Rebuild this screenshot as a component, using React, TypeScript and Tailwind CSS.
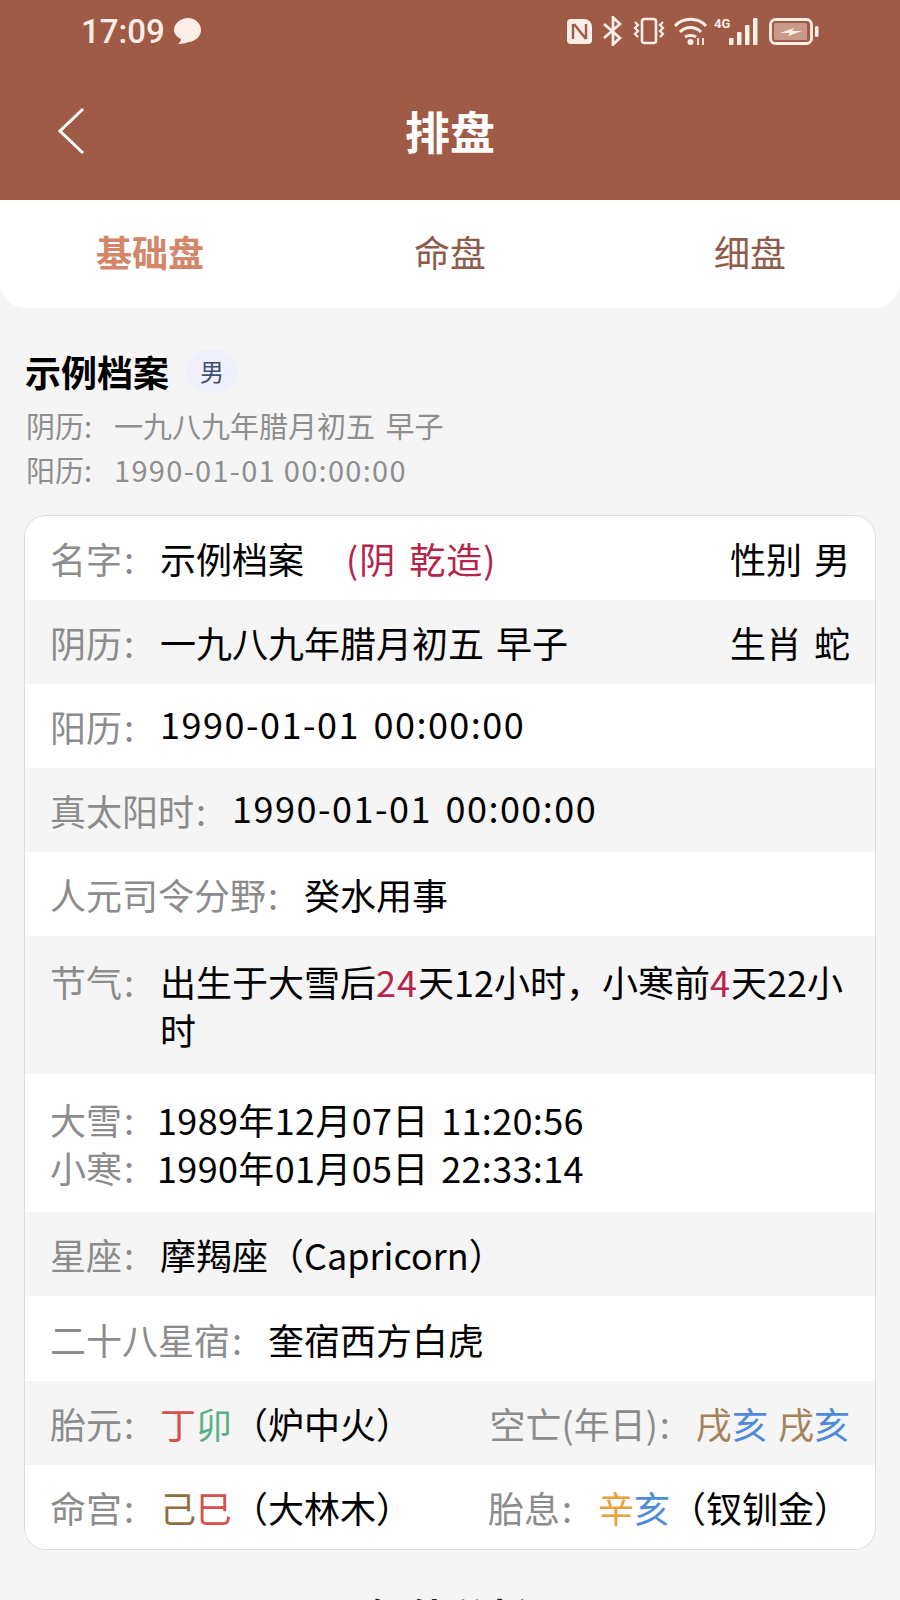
import React from 'react';

const font = '[font-family:"Noto_Sans_CJK_SC","Noto_Sans",sans-serif]';
const red = 'text-[#b5254a]';

const Label: React.FC<{ text: string }> = ({ text }) => (
  <span className="text-[#8c8c8c] mr-[26px]">{text}<span className="ml-[2px]">:</span></span>
);

const StatusIcons: React.FC = () => (
  <div className="flex items-center text-[#fdeee8]">
    <svg className="mr-[10px]" width="27" height="27" viewBox="0 0 27 27">
      <path d="M5 1h4v25H5a4 4 0 0 1-4-4V5a4 4 0 0 1 4-4z" fill="currentColor" />
      <path d="M9 1h9a8 8 0 0 1 8 8v13a4 4 0 0 1-4 4H9z" fill="currentColor" />
      <path d="M7 6v15M8 6l12 15M20 6v15" stroke="#9f5b45" strokeWidth="2.4" fill="none" />
    </svg>
    <svg className="mr-[10px]" width="19" height="30" viewBox="0 0 19 30" fill="none" stroke="currentColor" strokeWidth="2.8">
      <path d="M1 8l16 14-7 6.5V1.5L17 8 1 22" />
    </svg>
    <svg className="mr-[8px]" width="34" height="28" viewBox="0 0 34 28" fill="none" stroke="currentColor" strokeWidth="2.6">
      <rect x="10" y="2" width="14" height="24" rx="2.5" />
      <path d="M3 5l3 3-3 3 3 3-3 3 3 3M31 5l-3 3 3 3-3 3 3 3-3 3" strokeWidth="2.2" />
    </svg>
    <svg className="mr-[7px]" width="33" height="28" viewBox="0 0 33 28" fill="none" stroke="currentColor" strokeWidth="3">
      <path d="M1 9c8-9 23-9 31 0M6 15c6-6 15-6 21 0M11 20c3-2 8-2 11 0" />
      <circle cx="16.500" cy="25" r="3" fill="currentColor" stroke="none" />
      <path d="M24 21v7M29 21v7" strokeWidth="1.8" />
    </svg>
    <div className="flex items-start mr-[10px] w-[45px] h-[28px]">
      <span className="text-[13px] font-bold leading-none w-[15px] [font-family:'Roboto',sans-serif]">4G</span>
      <svg width="30" height="28" viewBox="0 0 30 28" fill="currentColor">
        <rect x="0" y="21" width="4.500" height="7" rx="1" />
        <rect x="8" y="15" width="4.500" height="13" rx="1" />
        <rect x="16" y="8" width="4.500" height="20" rx="1" />
        <rect x="24" y="1" width="4.500" height="27" rx="1" />
      </svg>
    </div>
    <svg width="50" height="27" viewBox="0 0 50 27">
      <rect x="1.500" y="1.500" width="41" height="24" rx="5" fill="none" stroke="currentColor" strokeWidth="2.8" />
      <rect x="5" y="5" width="33" height="17" rx="1.500" fill="#c99a89" />
      <path d="M11 15l14-5-2 3h10l-14 5 2-3z" fill="currentColor" />
      <rect x="46" y="8" width="3.500" height="11" rx="1.500" fill="currentColor" />
    </svg>
  </div>
);

const Row: React.FC<{ gray?: boolean; tall?: boolean; children: React.ReactNode }> = ({ gray, tall, children }) => (
  <div className={`pl-[25px] pr-[25px] flex items-center justify-between ${tall ? 'h-[85px]' : 'h-[84px]'} ${gray ? 'bg-[#f5f5f5]' : 'bg-white'}`}>
    {children}
  </div>
);

export default function App() {
  return (
    <div className={`w-[900px] h-[1600px] overflow-hidden bg-[#f5f5f5] ${font}`}>
      <div className="h-[200px] bg-[#9f5b45] relative">
        <div className="flex items-center justify-between pl-[81px] pr-[81px] h-[62px]">
          <div className="flex items-center gap-[7px] text-[#fdeee8]">
            <span className="text-[33px] font-medium leading-none [font-family:'Roboto',sans-serif]">17:09</span>
            <svg width="30" height="28" viewBox="0 0 30 28" fill="currentColor">
              <path d="M16 1c7 0 13 5 13 12 0 6-5 11-12 12-3 1-7 2-11 2 2-2 3-3 3-5-4-2-7-5-7-9C2 6 9 1 16 1z" />
            </svg>
          </div>
          <StatusIcons />
        </div>
        <div className="flex items-center justify-center h-[72px] mt-[32px] relative">
          <svg className="absolute left-[56px] top-[12px]" width="32" height="50" viewBox="0 0 32 50" fill="none" stroke="#fff" strokeWidth="3">
            <path d="M27 3L4 25l23 22" />
          </svg>
          <span className="text-white text-[45px] font-bold leading-none">排盘</span>
        </div>
      </div>

      <div className="h-[108px] bg-white rounded-b-[26px] grid grid-cols-3 items-center pb-[6px]">
        <div className="text-center text-[36px] font-bold text-[#d3866a]">基础盘</div>
        <div className="text-center text-[36px] text-[#8f5a4a]">命盘</div>
        <div className="text-center text-[36px] text-[#8f5a4a]">细盘</div>
      </div>

      <div className="px-[24px] pt-[38px]">
        <div className="flex items-center h-[50px] pl-[1px]">
          <span className="text-[36px] font-bold text-black">示例档案</span>
          <span className="ml-[17px] w-[52px] h-[42px] rounded-full bg-[#eef1fb] flex items-center justify-center text-[24px] text-[#3f4f73]">男</span>
        </div>
        <div className="mt-[8px] pl-[2px] text-[29px] leading-[43.5px] text-[#8e8e8e] [word-spacing:4px]">
          <div><span className="mr-[22px]">阴历:</span>一九八九年腊月初五 早子</div>
          <div><span className="mr-[22px]">阳历:</span><span className="tracking-[1.3px] [word-spacing:0px]">1990-01-01 00:00:00</span></div>
        </div>

        <div className="mt-[24px] rounded-[22px] border border-[#dcdcdc] overflow-hidden text-[36px] leading-[48px] text-black [word-spacing:4px]">
          <Row>
            <div className="flex-1">
              <Label text="名字" />
              <span>示例档案</span>
              <span className={`ml-[42px] tracking-[1px] ${red}`}>(阴 乾造)</span>
            </div>
            <span>性别 男</span>
          </Row>
          <Row gray>
            <div>
              <Label text="阴历" />
              <span>一九八九年腊月初五 早子</span>
            </div>
            <span>生肖 蛇</span>
          </Row>
          <Row>
            <div>
              <Label text="阳历" />
              <span className="inline-block -translate-y-[3px] tracking-[1.5px]">1990-01-01 00:00:00</span>
            </div>
          </Row>
          <Row gray>
            <div>
              <Label text="真太阳时" />
              <span className="inline-block -translate-y-[3px] tracking-[1.5px]">1990-01-01 00:00:00</span>
            </div>
          </Row>
          <Row>
            <div>
              <Label text="人元司令分野" />
              <span>癸水用事</span>
            </div>
          </Row>
          <div className="bg-[#f5f5f5] h-[138px] pl-[25px] pr-[20px] flex items-start pt-[21px]">
            <Label text="节气" />
            <div className="flex-1">
              出生于大雪后<span className={`tracking-[1px] ${red}`}>24</span>天12小时，小寒前<span className={`tracking-[1px] ${red}`}>4</span>天22小时
            </div>
          </div>
          <div className="bg-white h-[138px] pl-[25px] pr-[25px] flex flex-col justify-center">
            <div>
              <Label text="大雪" />
              <span className="-ml-[3px] tracking-[0.35px]">1989年12月07日 11:20:56</span>
            </div>
            <div>
              <Label text="小寒" />
              <span className="-ml-[3px] tracking-[0.35px]">1990年01月05日 22:33:14</span>
            </div>
          </div>
          <Row gray>
            <div>
              <Label text="星座" />
              <span>摩羯座（Capricorn）</span>
            </div>
          </Row>
          <Row tall>
            <div>
              <Label text="二十八星宿" />
              <span>奎宿西方白虎</span>
            </div>
          </Row>
          <Row gray>
            <div>
              <Label text="胎元" />
              <span className="text-[#d9504a]">丁</span>
              <span className="text-[#5cb085]">卯</span>
              <span>（炉中火）</span>
            </div>
            <div className="[word-spacing:2px]">
              <Label text="空亡(年日)" />
              <span className="text-[#a5835a]">戌</span>
              <span className="text-[#4f8bd6]">亥</span>
              <span> </span>
              <span className="text-[#a5835a]">戌</span>
              <span className="text-[#4f8bd6]">亥</span>
            </div>
          </Row>
          <Row>
            <div>
              <Label text="命宫" />
              <span className="text-[#8f6f3f]">己</span>
              <span className="text-[#d9504a]">巳</span>
              <span>（大林木）</span>
            </div>
            <div>
              <Label text="胎息" />
              <span className="text-[#e8a23a]">辛</span>
              <span className="text-[#4f8bd6]">亥</span>
              <span>（钗钏金）</span>
            </div>
          </Row>
        </div>

        <div className="mt-[42px] text-center text-[40px] leading-[48px] font-bold text-[#222]">智能分析</div>
      </div>
    </div>
  );
}
